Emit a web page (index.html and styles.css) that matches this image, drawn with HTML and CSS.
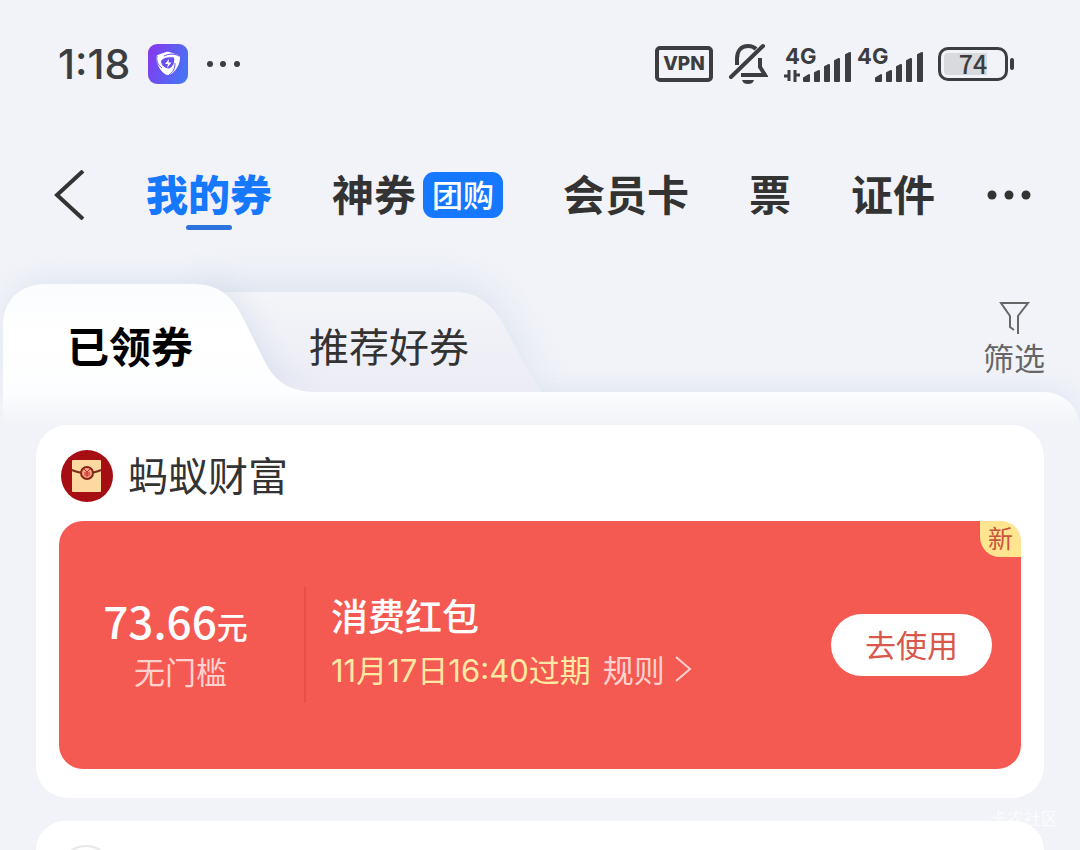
FILE: index.html
```html
<!DOCTYPE html>
<html lang="zh-CN">
<head>
<meta charset="UTF-8" />
<meta name="viewport" content="width=device-width, initial-scale=1" />
<title>我的券</title>
<link rel="stylesheet" href="styles.css">
</head>
<body>

<header class="status">
  <div class="status-side">
    <span class="clock">1:18</span>
    <svg class="app-icon" width="40" height="40" viewBox="0 0 40 40" aria-hidden="true">
      <defs>
        <linearGradient id="app-bg" x1="0" y1="0" x2="1" y2="0.4">
          <stop offset="0" stop-color="#8a35ee" />
          <stop offset="1" stop-color="#4a70f4" />
        </linearGradient>
      </defs>
      <rect width="40" height="40" rx="9" fill="url(#app-bg)" />
      <path d="M8 14c0-2 1-3 3-3.500l7-2.500c2-.5 3-.3 5 .5l6 2c2 .6 3 2 3 4-.5 6-3 11-8 15-2.500 2-5 2-7.500.3C12 26 9 21 8 14z" fill="#fff" />
      <path d="M13 17c2-3 6-4.500 13-3.500 1 5-1 9-5 11-5-.5-7.500-3-8-7.500z" fill="#6550ee" />
      <path d="M9 12c-1 5 1 9 5 12M31 12c-5-3-11-2-15 0M21 31c4-3 6-6 6-12" fill="none" stroke="#6550ee" stroke-width="1" />
      <path d="M21 15l-4 5h3l-1 4 4.500-5.500h-3z" fill="#fff" />
    </svg>
    <svg width="36" height="8" viewBox="0 0 36 8" fill="#3c3d40" aria-hidden="true">
      <circle cx="4" cy="4" r="3" /><circle cx="17" cy="4" r="3" /><circle cx="31" cy="4" r="3" />
    </svg>
  </div>
  <div class="status-side status-right">
    <span class="vpn">VPN</span>
    <svg class="bell" width="40" height="42" viewBox="0 0 40 42" fill="none" stroke="#3c3d40" stroke-width="4" aria-hidden="true">
      <path d="M9 22v-6c0-8 4-13 11-13 3 0 6 1 8 3M32 15v9l5 8H13" />
      <path d="M3 34L35 3" stroke-linecap="round" />
      <path d="M14 37h12c-1 3-3 4-6 4s-5-1-6-4z" fill="#3c3d40" stroke="none" />
    </svg>
    <svg class="signal" width="140" height="40" viewBox="0 0 140 40" aria-label="4G" fill="#3c3d40">
      <text x="2" y="20" class="net">4G</text>
      <text x="74" y="20" class="net">4G</text>
      <path d="M6 26v11M7 32H1M12 38V26M11 31h6" fill="none" stroke="#3c3d40" stroke-width="3" />
      <g stroke="#3c3d40" stroke-linejoin="round" stroke-width="2">
        <path id="bars" d="M21 34l5-3v6h-5zM32 29l4-2v10h-4zM42 23l4-2v16h-4zM52 17l4-2v22h-4zM63 11l4-2v28h-4z" />
        <use href="#bars" x="72" />
      </g>
    </svg>
    <div class="battery"><span class="battery-level">74</span></div>
  </div>
</header>

<nav class="nav">
  <button class="back" aria-label="返回">
    <svg width="32" height="50" viewBox="0 0 32 50" fill="none" stroke="#333" stroke-width="4"><path d="M29 1L3 25l26 24" /></svg>
  </button>
  <a href="#" class="nav-item current">我的券</a>
  <a href="#" class="nav-item with-badge">神券</a>
  <a href="#" class="badge">团购</a>
  <a href="#" class="nav-item">会员卡</a>
  <a href="#" class="nav-item">票</a>
  <a href="#" class="nav-item">证件</a>
  <button class="more" aria-label="更多">
    <svg width="44" height="10" viewBox="0 0 44 10" fill="#333"><circle cx="5" cy="5" r="4.500" /><circle cx="22" cy="5" r="4.500" /><circle cx="39" cy="5" r="4.500" /></svg>
  </button>
</nav>

<main class="wallet">
  <div class="tabs">
    <svg class="tab-shape" width="560" height="108" viewBox="0 0 560 108" aria-hidden="true">
      <defs>
        <linearGradient id="tab-on" x1="0" y1="0" x2="0" y2="1">
          <stop offset="0" stop-color="#fafcfd" />
          <stop offset="0.5" stop-color="#fff" />
          <stop offset="1" stop-color="#fcfdfe" />
        </linearGradient>
        <linearGradient id="tab-off" x1="0" y1="0" x2="0" y2="1">
          <stop offset="0" stop-color="#f4f5f8" />
          <stop offset="1" stop-color="#ebecf5" />
        </linearGradient>
      </defs>
      <path class="shape-off" d="M200 8H454C476 8 489 18 501 36C515 60 526 88 542 108H200Z" fill="url(#tab-off)" />
      <path class="shape-on" d="M3 109V42C3 16 20 0 46 0H194C218 0 232 12 242 32L265 78C275 97 288 107 314 108V109Z" fill="url(#tab-on)" />
    </svg>
    <button class="tab tab-active">已领券</button>
    <button class="tab">推荐好券</button>
    <button class="filter">
      <svg width="32" height="36" viewBox="0 0 32 36" fill="none" stroke="#666" stroke-width="2"><path d="M20 35V17L30 4H3l9 13v11l4 3" /></svg>
      筛选
    </button>
  </div>

  <div class="sheet">
    <section class="card">
      <h2 class="shop">
        <svg width="54" height="54" viewBox="0 0 54 54" aria-hidden="true">
          <circle cx="28" cy="27" r="26" fill="#a50f14" />
          <rect x="13" y="11" width="29" height="32" rx="1" fill="#fbd9a0" />
          <path d="M13 21c8 4 21 4 29 0" fill="none" stroke="#7c2a1c" stroke-width="2" />
          <circle cx="28" cy="24" r="6" fill="#f4a583" stroke="#8a2418" stroke-width="2" />
          <path d="M25 20l3 3 3-3M28 23v5M25 24h6M25 26h6" fill="none" stroke="#c8282a" stroke-width="1" />
        </svg>
        <span class="shop-name">蚂蚁财富</span>
      </h2>
      <div class="coupon">
        <span class="new">新</span>
        <div class="value">
          <div class="amount">73.66<span class="unit">元</span></div>
          <div class="limit">无门槛</div>
        </div>
        <div class="info">
          <h3 class="title">消费红包</h3>
          <div class="meta">
            <span class="expire">11月17日16:40过期</span>
            <a href="#" class="rules">规则<svg width="18" height="28" viewBox="0 0 18 28" fill="none" stroke="currentColor" stroke-width="2"><path d="M2 2l14 12L2 26" /></svg></a>
          </div>
        </div>
        <button class="use">去使用</button>
      </div>
    </section>

    <section class="card next">
      <span class="logo-empty"></span>
    </section>
  </div>
</main>

<div class="watermark">卡农社区</div>

</body>
</html>
```
FILE: styles.css
```css
:root {
  --bg: #f1f3f8;
  --ink: #333;
  --blue: #1677ff;
  --red: #f55a52;
}
* {
  box-sizing: border-box;
}
html {
  background: var(--bg);
}
body {
  margin: 0;
  height: 100vh;
  overflow: hidden;
  position: relative;
  display: flex;
  flex-direction: column;
  color: var(--ink);
  font-family: "Noto Sans CJK SC", sans-serif;
}
button {
  border: none;
  background: none;
  padding: 0;
  margin: 0;
  font-family: inherit;
  color: inherit;
  cursor: pointer;
}
a {
  color: inherit;
  text-decoration: none;
}
svg {
  display: block;
  flex: none;
}
h2, h3 {
  margin: 0;
  font-weight: 400;
}

/* status bar */
.status {
  display: flex;
  flex: none;
  justify-content: space-between;
  align-items: center;
  height: 128px;
  padding: 0 72px 0 58px;
  color: #3c3d40;
}
.status-side {
  display: flex;
  align-items: center;
  gap: 18px;
}
.status-right {
  gap: 15px;
}
.clock {
  font-family: "Inter", sans-serif;
  font-size: 41px;
  font-weight: 500;
  line-height: 48px;
}
.vpn {
  width: 58px;
  height: 36px;
  border: 4px solid #3c3d40;
  border-radius: 5px;
  font-family: "Inter", sans-serif;
  font-size: 19px;
  font-weight: 800;
  line-height: 28px;
  text-align: center;
}
.net {
  font-family: "Inter", sans-serif;
  font-size: 22px;
  font-weight: 700;
}
.battery {
  position: relative;
  width: 70px;
  height: 34px;
  padding: 3px;
  border: 3px solid #3c3d40;
  border-radius: 10px;
}
.battery::after {
  content: "";
  position: absolute;
  top: 8px;
  right: -9px;
  width: 4px;
  height: 12px;
  border-radius: 2px;
  background: #3c3d40;
}
.battery-level {
  display: block;
  height: 22px;
  border-radius: 4px;
  background: linear-gradient(90deg, #d9dadd 74%, transparent 74%);
  font-size: 25px;
  font-weight: 500;
  line-height: 20px;
  text-align: center;
}

/* top navigation */
.nav {
  display: flex;
  flex: none;
  align-items: center;
  gap: 60px;
  height: 134px;
  padding: 0 46px 0 54px;
}
.nav-item {
  position: relative;
  padding-bottom: 4px;
  font-size: 42px;
  font-weight: 700;
  line-height: 60px;
  white-space: nowrap;
}
.current {
  color: var(--blue);
  font-weight: 900;
}
.current::after {
  content: "";
  position: absolute;
  left: 50%;
  bottom: -3px;
  width: 46px;
  height: 5px;
  margin-left: -23px;
  border-radius: 3px;
  background: #2c73e0;
}
.with-badge {
  margin-right: -53px;
}
.badge {
  height: 46px;
  padding: 0 9px;
  border-radius: 11px;
  background: var(--blue);
  color: #fff;
  font-size: 31px;
  font-weight: 500;
  line-height: 43px;
  white-space: nowrap;
}
.more {
  margin-left: -8px;
}

/* tabs over the sheet */
.wallet {
  flex: 1;
  min-height: 0;
  display: flex;
  flex-direction: column;
}
.tabs {
  position: relative;
  display: flex;
  flex: none;
  align-items: center;
  height: 108px;
  margin-top: 22px;
  padding: 0 35px 0 67px;
}
.tab-shape {
  position: absolute;
  top: 0;
  left: 0;
  overflow: visible;
}
.shape-off {
  filter: drop-shadow(0 -8px 18px rgba(190, 203, 228, 0.4));
}
.shape-on {
  filter: drop-shadow(4px -2px 14px rgba(190, 203, 228, 0.4));
}
.tab {
  position: relative;
  margin-right: 116px;
  padding-top: 13px;
  font-size: 40px;
  line-height: 60px;
}
.tab-active {
  color: #000;
  font-size: 42px;
  font-weight: 700;
}
.filter {
  position: relative;
  display: flex;
  flex-direction: column;
  align-items: center;
  gap: 2px;
  margin-left: auto;
  color: #666;
  font-size: 31px;
  line-height: 40px;
}
.sheet {
  position: relative;
  flex: 1;
  min-height: 0;
  display: flex;
  flex-direction: column;
  margin-left: 3px;
  padding: 33px 36px 0 33px;
  border-radius: 0 36px 0 0;
  background: linear-gradient(#fcfdfe, var(--bg) 34px);
}
.sheet::before {
  content: "";
  position: absolute;
  z-index: -1;
  inset: 0 0 auto 500px;
  height: 40px;
  border-radius: 0 36px 0 0;
  box-shadow: 0 -4px 24px rgba(190, 203, 228, 0.3);
}

/* coupon cards */
.card {
  flex: none;
  padding: 24px 23px 29px;
  border-radius: 32px;
  background: #fff;
}
.next {
  flex: 1;
  min-height: 0;
  margin-top: 23px;
  padding-bottom: 0;
  border-radius: 32px 32px 0 0;
  overflow: hidden;
}
.logo-empty {
  display: block;
  width: 54px;
  height: 54px;
  border: 2px solid #e8e8e8;
  border-radius: 50%;
}
.shop {
  display: flex;
  align-items: center;
  gap: 15px;
  margin-bottom: 18px;
  font-size: 40px;
  line-height: 50px;
}
.shop-name {
  padding-bottom: 4px;
}
.coupon {
  position: relative;
  display: flex;
  align-items: center;
  min-height: 248px;
  padding: 0 29px 0 0;
  border-radius: 24px;
  background: var(--red);
  color: #fff;
}
.new {
  position: absolute;
  top: 0;
  right: 0;
  width: 41px;
  height: 36px;
  border-radius: 0 20px 0 20px;
  background: #ffe58f;
  color: #c8553c;
  font-size: 25px;
  line-height: 32px;
  text-align: center;
}
.value {
  width: 247px;
  height: 116px;
  padding-top: 7px;
  border-right: 2px solid #e94f49;
  text-align: center;
}
.amount {
  padding-right: 12px;
  font-size: 44px;
  font-weight: 500;
  line-height: 52px;
}
.unit {
  font-size: 31px;
}
.limit {
  padding-right: 2px;
  color: #ffd2d0;
  font-size: 31px;
  line-height: 38px;
}
.info {
  flex: 1;
  padding: 0 0 6px 25px;
}
.title {
  font-size: 37px;
  font-weight: 500;
  line-height: 56px;
}
.meta {
  display: flex;
  align-items: baseline;
  gap: 12px;
  font-size: 31px;
  line-height: 52px;
}
.expire {
  color: #fde9a4;
  font-family: "Inter", "Noto Sans CJK SC", sans-serif;
}
.rules {
  display: flex;
  align-items: center;
  gap: 9px;
  color: #ffd2d0;
}
.use {
  width: 161px;
  height: 62px;
  padding-bottom: 4px;
  border-radius: 31px;
  background: #fff;
  color: #d9584c;
  font-size: 31px;
}
.watermark {
  position: absolute;
  right: 22px;
  bottom: 20px;
  color: rgba(255, 255, 255, 0.7);
  font-size: 17px;
  line-height: 24px;
}
```
